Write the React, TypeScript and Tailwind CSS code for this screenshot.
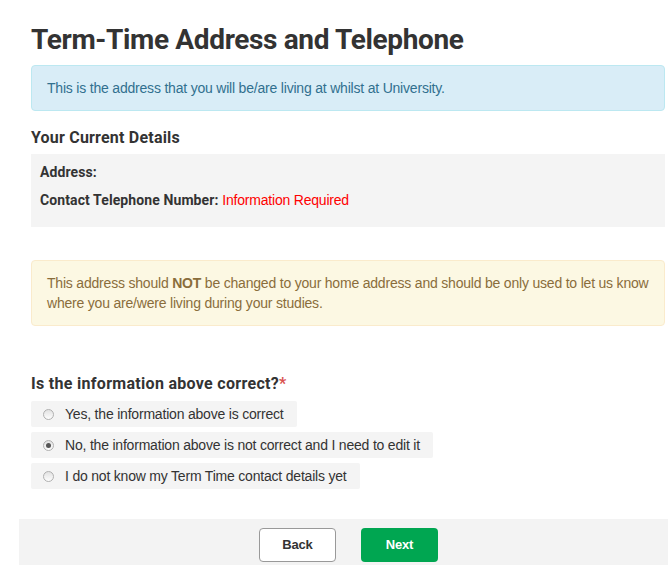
import React, { useState } from "react";

const options = [
  "Yes, the information above is correct",
  "No, the information above is not correct and I need to edit it",
  "I do not know my Term Time contact details yet",
];

const heading = "font-['Roboto','Liberation_Sans',sans-serif] font-bold text-[#333]";

const Radio = ({ checked }: { checked: boolean }) => (
  <span className="w-[11px] h-[11px] rounded-full border border-[#b0b0b0] bg-gradient-to-b from-[#e2e2e2] to-[#fdfdfd] flex items-center justify-center shrink-0">
    {checked && <span className="w-[5px] h-[5px] rounded-full bg-[#555]" />}
  </span>
);

const App = () => {
  const [answer, setAnswer] = useState(1);

  return (
    <div className="min-h-screen bg-white overflow-hidden font-['Liberation_Sans',Arial,sans-serif] text-[14px] tracking-[-0.2px] text-[#333]">
      <div className="pl-[31px] pr-[3px]">
        {/* title */}
        <h1 className={`${heading} text-[28px] leading-[31px] pt-[24px] tracking-[-0.35px]`}>
          Term-Time Address and Telephone
        </h1>

        {/* info */}
        <div className="mt-[10px] bg-[#d9edf7] border border-[#bce8f1] rounded-[4px] px-[15px] py-[12px] text-[#31708f] leading-[20px]">
          This is the address that you will be/are living at whilst at University.
        </div>

        {/* current details */}
        <h2 className={`${heading} text-[16px] leading-[22px] mt-[16px] tracking-[0.2px]`}>
          Your Current Details
        </h2>
        <div className="mt-[5px] bg-[#f4f4f4] pl-[9px] pt-[8px] pb-[17px] flex flex-col gap-[8px] leading-[20px]">
          <p className={`${heading} text-[14px] tracking-[0.1px]`}>Address:</p>
          <p>
            <span className={`${heading} text-[14px] tracking-[0.1px]`}>Contact Telephone Number:</span>{" "}
            <span className="text-[#f00]">Information Required</span>
          </p>
        </div>

        {/* warning */}
        <div className="mt-[33px] bg-[#fcf8e3] border border-[#faebcc] rounded-[4px] px-[15px] py-[12px] text-[#8a6d3b] leading-[20px]">
          This address should <strong className="font-bold">NOT</strong> be changed to your home
          address and should be only used to let us know where you are/were living during your
          studies.
        </div>

        {/* question */}
        <h3 className={`${heading} text-[16px] leading-[22px] mt-[47px] tracking-[0.3px]`}>
          Is the information above correct?<span className="text-[#d9534f]">*</span>
        </h3>
        <div className="mt-[6px] flex flex-col items-start gap-[5px]">
          {options.map((opt, i) => (
            <label
              key={opt}
              onClick={() => setAnswer(i)}
              className="flex items-center bg-[#f4f4f4] rounded-[2px] pl-[12px] pr-[13px] py-[3px] leading-[20px] cursor-pointer"
            >
              <Radio checked={answer === i} />
              <span className="ml-[11px]">{opt}</span>
            </label>
          ))}
        </div>
      </div>

      {/* footer */}
      <div className="mt-[30px] ml-[19px] bg-[#f3f3f3] pt-[9px] pb-[12px] pl-[10px] flex justify-center gap-[25px]">
        <button className="w-[77px] h-[34px] bg-white border border-[#999] rounded-[4px] text-[13px] font-bold text-[#333]">
          Back
        </button>
        <button className="w-[77px] h-[34px] bg-[#00a651] rounded-[4px] text-[13px] font-bold text-white">
          Next
        </button>
      </div>
    </div>
  );
};

export default App;
